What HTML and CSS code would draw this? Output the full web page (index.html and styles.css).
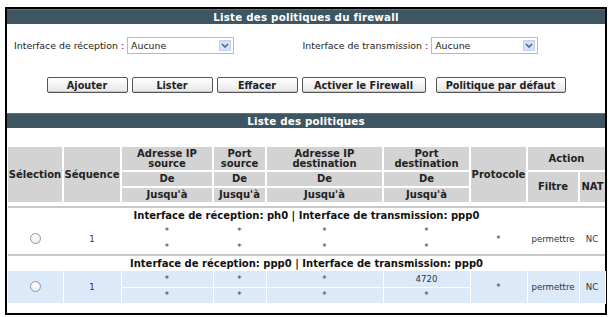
FILE: index.html
```html
<!DOCTYPE html>
<html lang="fr">
<head>
  <meta charset="UTF-8" />
  <title>Liste des politiques du firewall</title>
  <link rel="stylesheet" href="styles.css">
</head>
<body>

  <div class="frame">
    <div class="bar">Liste des politiques du firewall</div>

    <!-- Interfaces -->
    <div class="filters">
      <div class="field">
        <span class="label">Interface de réception :</span>
        <span class="select"><span class="value">Aucune</span><span class="arrow"><svg width="8" height="5" viewBox="0 0 8 5"><path d="M1 1 L4 4 L7 1" fill="none" stroke="#4d6185" stroke-width="1.5"/></svg></span></span>
      </div>
      <div class="field">
        <span class="label">Interface de transmission :</span>
        <span class="select"><span class="value">Aucune</span><span class="arrow"><svg width="8" height="5" viewBox="0 0 8 5"><path d="M1 1 L4 4 L7 1" fill="none" stroke="#4d6185" stroke-width="1.5"/></svg></span></span>
      </div>
    </div>

    <!-- Actions -->
    <div class="actions">
      <button class="btn btn-sm">Ajouter</button>
      <button class="btn btn-sm">Lister</button>
      <button class="btn btn-sm">Effacer</button>
      <button class="btn btn-wide">Activer le Firewall</button>
      <button class="btn btn-wide2">Politique par défaut</button>
    </div>

    <div class="bar bar-list">Liste des politiques</div>

    <table class="rules">
      <colgroup>
        <col class="c-sel"><col class="c-seq"><col class="c-ips"><col class="c-ps">
        <col class="c-ipd"><col class="c-pd"><col class="c-proto"><col class="c-filt"><col class="c-nat">
      </colgroup>
      <thead>
        <tr class="h1">
          <th rowspan="3">Sélection</th>
          <th rowspan="3">Séquence</th>
          <th>Adresse IP<br>source</th>
          <th>Port<br>source</th>
          <th>Adresse IP<br>destination</th>
          <th>Port<br>destination</th>
          <th rowspan="3">Protocole</th>
          <th colspan="2">Action</th>
        </tr>
        <tr class="h2">
          <th>De</th><th>De</th><th>De</th><th>De</th>
          <th rowspan="2">Filtre</th>
          <th rowspan="2">NAT</th>
        </tr>
        <tr class="h2">
          <th>Jusqu'à</th><th>Jusqu'à</th><th>Jusqu'à</th><th>Jusqu'à</th>
        </tr>
      </thead>
      <tbody>
        <tr class="spacer"><td colspan="9"></td></tr>
        <tr class="group"><td colspan="9">Interface de réception: ph0 | Interface de transmission: ppp0</td></tr>
        <tr class="row">
          <td rowspan="2"><span class="radio"></span></td>
          <td rowspan="2">1</td>
          <td>*</td><td>*</td><td>*</td><td>*</td>
          <td rowspan="2">*</td>
          <td rowspan="2">permettre</td>
          <td rowspan="2">NC</td>
        </tr>
        <tr class="row">
          <td>*</td><td>*</td><td>*</td><td>*</td>
        </tr>
        <tr class="group"><td colspan="9">Interface de réception: ppp0 | Interface de transmission: ppp0</td></tr>
        <tr class="row alt">
          <td rowspan="2"><span class="radio"></span></td>
          <td rowspan="2">1</td>
          <td>*</td><td>*</td><td>*</td><td>4720</td>
          <td rowspan="2">*</td>
          <td rowspan="2">permettre</td>
          <td rowspan="2">NC</td>
        </tr>
        <tr class="row alt">
          <td>*</td><td>*</td><td>*</td><td>*</td>
        </tr>
        <tr class="end"><td colspan="9"></td></tr>
      </tbody>
    </table>
  </div>

</body>
</html>
```

FILE: styles.css
```css
* {
  margin: 0;
  padding: 0;
  box-sizing: border-box;
}

body {
  padding: 7px 3px 0 5px;
  font-family: "DejaVu Sans", Verdana, sans-serif;
  font-size: 9.4px;
  color: #222;
  background: #fff;
}

.frame {
  width: 602px;
  height: 308px;
  border: 2px solid #000;
}

.bar {
  height: 15px;
  line-height: 14px;
  background: #3d5661;
  border-top: 1px solid #5b7480;
  color: #fff;
  font-weight: bold;
  font-size: 10.3px;
  text-align: center;
  letter-spacing: 0.2px;
}

/* interfaces */
.filters {
  display: grid;
  grid-template-columns: 1fr 1fr;
  padding: 0 14px 0 7px;
  margin-top: 13px;
  height: 17px;
}

.field {
  display: flex;
  align-items: center;
}

.label {
  margin-right: 3px;
  color: #222;
}

.select {
  position: relative;
  display: inline-flex;
  align-items: center;
  width: 107px;
  height: 17px;
  border: 1px solid #a9bdd2;
  background: #fff;
  padding-left: 3px;
}

.arrow {
  position: absolute;
  right: 2px;
  top: 2px;
  width: 12px;
  height: 11px;
  background: #d4e0f7;
  border: 1px solid #c2d2ef;
  display: flex;
  align-items: center;
  justify-content: center;
}

/* buttons */
.actions {
  display: flex;
  justify-content: center;
  gap: 4px;
  margin-top: 23px;
  height: 16px;
}

.btn {
  height: 16px;
  font-family: "DejaVu Sans", Verdana, sans-serif;
  font-size: 9.7px;
  font-weight: bold;
  color: #222;
  background: linear-gradient(#ffffff, #e6e6e6);
  border: 1px solid #555;
  border-radius: 2px;
  box-shadow: inset 0 -1px 0 #c8c8c8;
}

.btn-sm { width: 81px; }
.btn-wide { width: 124px; margin-right: 6px; }
.btn-wide2 { width: 130px; }

.bar-list {
  margin-top: 20px;
}

/* table */
.rules {
  width: 597px;
  margin: 19px 0 0 1px;
  border-collapse: collapse;
  table-layout: fixed;
  text-align: center;
}

.c-sel { width: 55px; }
.c-seq { width: 58px; }
.c-ips { width: 92px; }
.c-ps { width: 53px; }
.c-ipd { width: 117px; }
.c-pd { width: 87px; }
.c-proto { width: 57px; }
.c-filt { width: 52px; }
.c-nat { width: 26px; }

.rules th {
  background: #d3d3d3;
  border: 2px solid #fff;
  font-weight: bold;
  font-size: 10px;
  color: #222;
  line-height: 10px;
  white-space: nowrap;
}

.rules thead tr:first-child th { border-top: 0; }
.rules th:first-child { border-left: 0; }
.rules th:last-child { border-right: 0; }

.rules .h1 th { height: 24px; }
.rules .h2 th { height: 16px; }

.spacer td { height: 4px; }

.group td {
  height: 16px;
  border-top: 2px solid #c9c9c9;
  font-weight: bold;
  font-size: 10px;
  color: #111;
}

.row td {
  height: 16px;
  font-size: 8.6px;
  color: #333;
}

.row.alt td {
  height: 16px;
  background: #dce9f9;
  border: 1px solid #fff;
  border-top: 0;
}

.row.alt td:first-child { border-left: 0; }

.end td {
  height: 0;
  border-top: 1px solid #c9c9c9;
}

.radio {
  display: inline-block;
  width: 11px;
  height: 11px;
  border: 1px solid #8c9aa6;
  border-radius: 50%;
  background: radial-gradient(circle at 40% 35%, #ffffff, #e3e6e9);
  vertical-align: middle;
}
```
